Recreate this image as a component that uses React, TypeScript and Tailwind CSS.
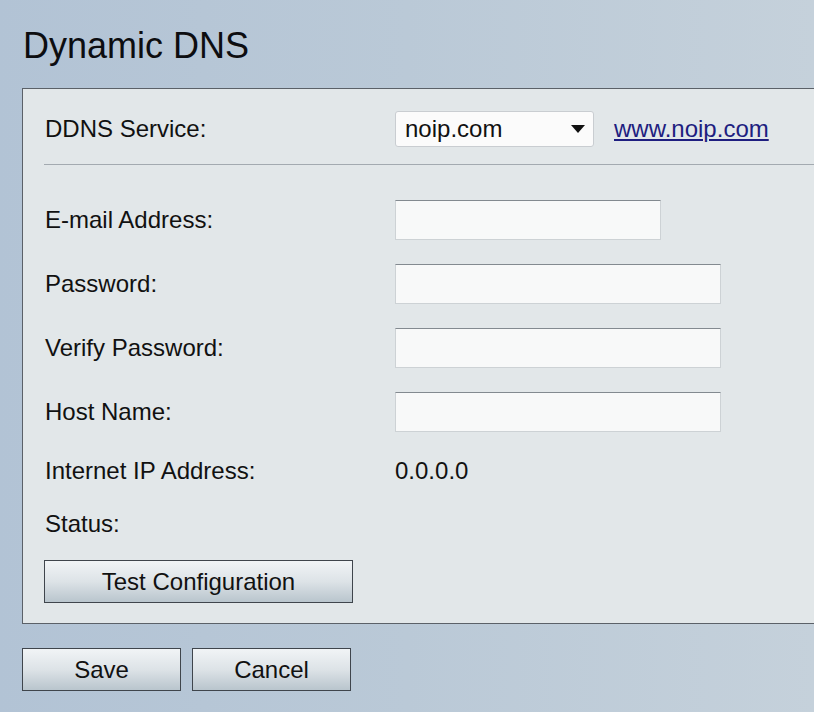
import React from "react";

const font = { fontFamily: '"Liberation Sans", Arial, sans-serif' };

interface FieldRow {
  label: string;
  width: string;
}

const inputs: FieldRow[] = [
  { label: "E-mail Address:", width: "w-[266px]" },
  { label: "Password:", width: "w-[326px]" },
  { label: "Verify Password:", width: "w-[326px]" },
  { label: "Host Name:", width: "w-[326px]" },
];

const btn =
  "h-[43px] border border-[#3f454c] bg-gradient-to-b from-[#f1f4f6] via-[#dde3e7] to-[#b9c5cd] text-[24px] text-[#111] flex items-center justify-center";

const App: React.FC = () => {
  return (
    <div
      className="w-full h-[712px] overflow-hidden bg-gradient-to-r from-[#b2c3d5] via-[#bac9d7] to-[#c5d1db] text-[#111]"
      style={font}
    >
      <div className="pt-[24px] pl-[23px] h-[44px] box-content text-[36px] leading-[44px] text-[#0d0d10]">
        Dynamic DNS
      </div>

      <div className="ml-[22px] mt-[20px] h-[536px] border-l border-t border-b border-[#5b6168] bg-[#e2e7e9] text-[24px]">
        <div className="pl-[22px] pt-[22px] flex items-center h-[36px] box-content">
          <div className="w-[350px]">DDNS Service:</div>
          <div className="w-[199px] h-[36px] rounded-[3px] border border-[#c9cdd1] bg-[#fbfbfb] flex items-center pl-[9px] pr-[8px]">
            <span className="flex-1">noip.com</span>
            <svg width="14" height="8" viewBox="0 0 14 8">
              <path d="M0 0 H14 L7 8 Z" fill="#111" />
            </svg>
          </div>
          <a href="#" className="ml-[20px] text-[#1e1e80] underline">
            www.noip.com
          </a>
        </div>

        <div className="ml-[21px] mt-[17px] h-[1px] bg-[#a3aab0]" />

        <div className="pl-[22px] pt-[35px] flex flex-col gap-[24px]">
          {inputs.map((f) => (
            <div key={f.label} className="flex items-center h-[40px]">
              <div className="w-[350px]">{f.label}</div>
              <div
                className={`${f.width} h-[40px] bg-[#f8f9f9] border border-[#cdd2d5] border-t-[#838a90]`}
              />
            </div>
          ))}
        </div>

        <div className="pl-[22px] mt-[20px] flex items-center h-[38px]">
          <div className="w-[350px]">Internet IP Address:</div>
          <div>0.0.0.0</div>
        </div>

        <div className="pl-[22px] mt-[15px] flex items-center h-[38px]">
          <div>Status:</div>
        </div>

        <div className="pl-[21px] mt-[17px]">
          <button className={`${btn} w-[309px]`}>Test Configuration</button>
        </div>
      </div>

      <div className="ml-[22px] mt-[24px] flex gap-[11px]">
        <button className={`${btn} w-[159px]`}>Save</button>
        <button className={`${btn} w-[159px]`}>Cancel</button>
      </div>
    </div>
  );
};

export default App;
